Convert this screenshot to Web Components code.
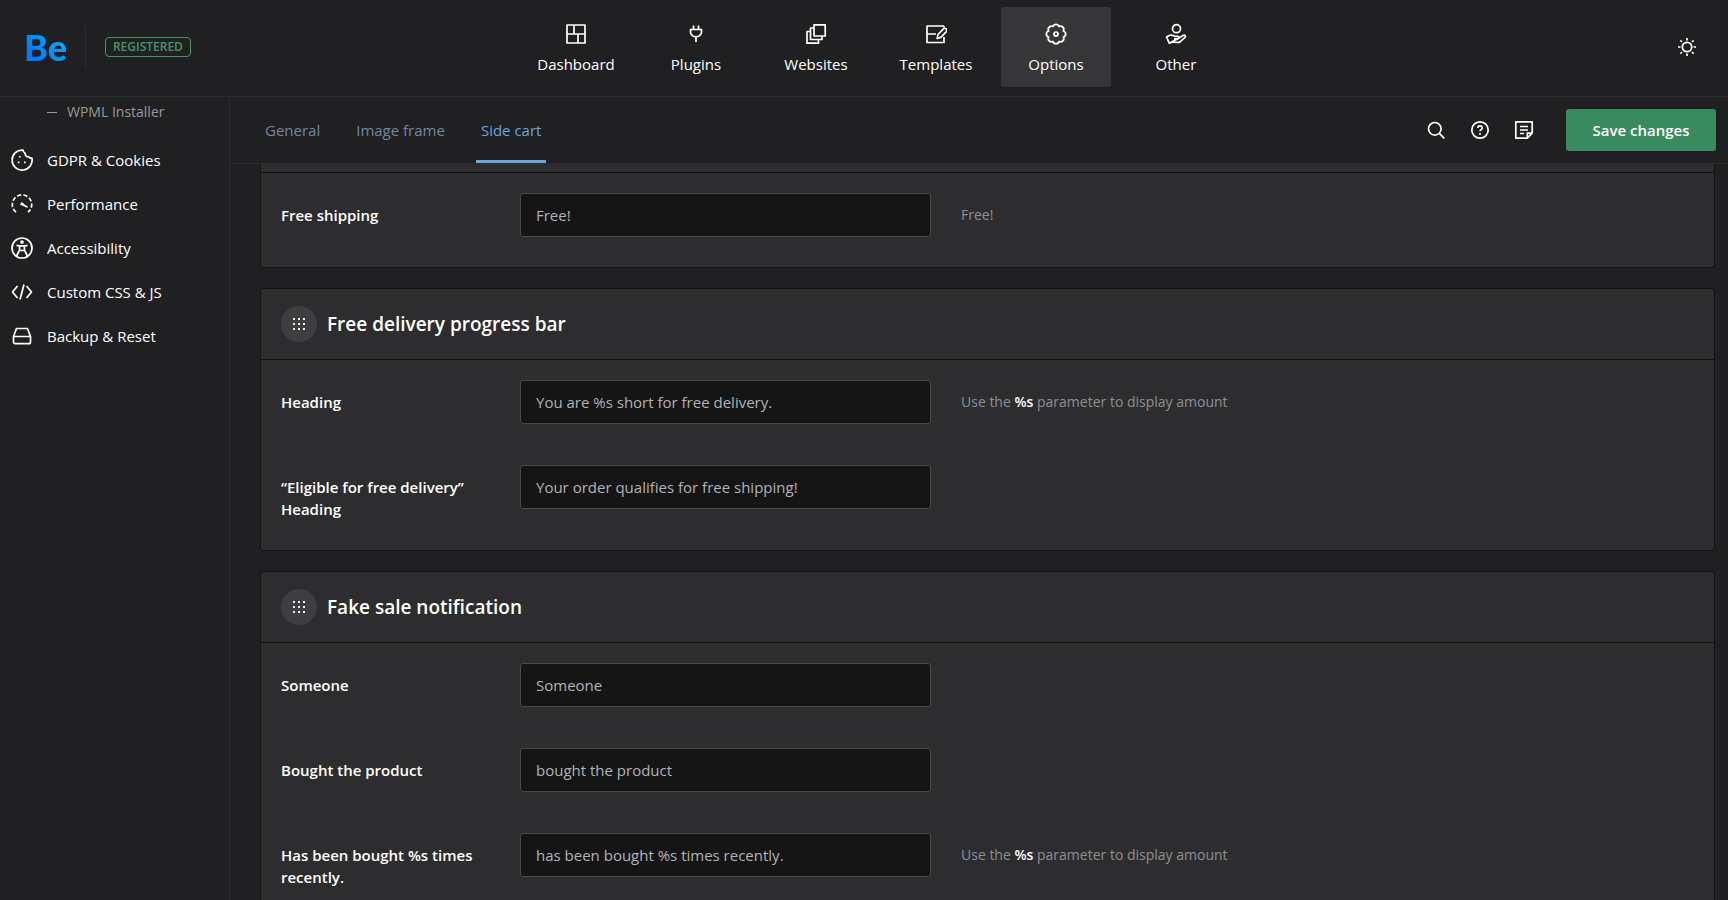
<!DOCTYPE html>
<html lang="en">
<head>
<meta charset="utf-8">
<title>Be Options – Side cart</title>
<style>
  :root {
    --bg: #202022;
    --line: #2d2d2f;
    --card: #2d2d2f;
    --card-line: #131314;
    --text: #fff;
    --muted: #98989c;
    --tab: #76849f;
    --accent: #6ca4dd;
    --green: #398a5e;
  }
  html, body { margin: 0; height: 100%; }
  body {
    background: var(--bg);
    color: var(--text);
    font: 15px/22px "Open Sans", "Noto Sans", sans-serif;
    overflow: hidden;
  }
</style>
</head>
<body>
<be-app>
  <be-header slot="header">
    <be-nav-item icon="dashboard">Dashboard</be-nav-item>
    <be-nav-item icon="plug">Plugins</be-nav-item>
    <be-nav-item icon="websites">Websites</be-nav-item>
    <be-nav-item icon="templates">Templates</be-nav-item>
    <be-nav-item icon="options" active>Options</be-nav-item>
    <be-nav-item icon="other">Other</be-nav-item>
  </be-header>

  <be-sidebar slot="sidebar">
    <be-side-item sub>WPML Installer</be-side-item>
    <be-side-item icon="cookie">GDPR &amp; Cookies</be-side-item>
    <be-side-item icon="gauge">Performance</be-side-item>
    <be-side-item icon="accessibility">Accessibility</be-side-item>
    <be-side-item icon="code">Custom CSS &amp; JS</be-side-item>
    <be-side-item icon="drive">Backup &amp; Reset</be-side-item>
  </be-sidebar>

  <be-toolbar slot="toolbar">
    <be-tab>General</be-tab>
    <be-tab>Image frame</be-tab>
    <be-tab active>Side cart</be-tab>
  </be-toolbar>

  <be-card continued>
    <be-field label="Free shipping" value="Free!">Free!</be-field>
  </be-card>
  <be-card heading="Free delivery progress bar">
    <be-field label="Heading" value="You are %s short for free delivery.">Use the <strong>%s</strong> parameter to display amount</be-field>
    <be-field label="“Eligible for free delivery” Heading" value="Your order qualifies for free shipping!"></be-field>
  </be-card>
  <be-card heading="Fake sale notification">
    <be-field label="Someone" value="Someone"></be-field>
    <be-field label="Bought the product" value="bought the product"></be-field>
    <be-field label="Has been bought %s times recently." value="has been bought %s times recently.">Use the <strong>%s</strong> parameter to display amount</be-field>
  </be-card>
</be-app>

<script>
const ICONS = {
  dashboard: '<path d="M2 2h18v18H2zM2 11h18M9 2v9M13 11v9"/>',
  plug: '<path d="M8.500 2.500v4M13.500 2.500v4M5.500 6.500h11v2.500a5.500 4.800 0 0 1-11 0zM11 14v5"/>',
  websites: '<path d="M9 1.800h11.200V13H9zM9 5H5.500v11.500H17V13M5.500 8.500H2v11.700h11.500v-3.500"/>',
  templates: '<path d="M19 3H2v16.500h17v-5.500M19 3v1.500M2 11h9"/><path d="m12.200 15.500.8-4 5.400-5.600a1.900 1.900 0 0 1 2.900 2.700l-5.500 5.800z"/>',
  options: '<path d="M7.940 3.610a3.200 3.200 0 0 1 6.120 0 3.200 3.200 0 0 1 4.330 4.330 3.200 3.200 0 0 1 0 6.120 3.200 3.200 0 0 1-4.330 4.330 3.200 3.200 0 0 1-6.120 0 3.200 3.200 0 0 1-4.330-4.330 3.200 3.200 0 0 1 0-6.120 3.200 3.200 0 0 1 4.330-4.330z"/><circle cx="11" cy="11" r="2"/>',
  other: '<circle cx="11.500" cy="5.700" r="4"/><path d="M4.300 20.200 1.500 14l3.200-1.700c2.300-.8 3.600.2 5.300 1h2.800c1.700.2 1.700 2.400 0 2.600H9M12.800 15.700l5.200-3.200c1.800-.9 3.200.9 1.800 2.200l-4.600 4c-1.200.8-2.500.8-4 .7-2.700-.2-4.200-.8-6.900.8z"/>',
  sun: '<circle cx="11" cy="11" r="4.700"/><path d="M11 2v2.500M11 17.500V20M2 11h2.500M17.500 11H20M4.400 4.400 6 6M16 16l1.600 1.600M4.400 17.600 6 16M16 6l1.600-1.600"/>',
  search: '<circle cx="9.800" cy="9.800" r="6.300"/><path d="m14.300 14.300 5 5"/>',
  help: '<circle cx="11" cy="11" r="8.200"/><path d="M8.800 9c0-2.700 4.400-2.700 4.400-.1 0 1.600-2.200 1.700-2.200 3.400"/><path d="M11 13.900v1.800"/>',
  note: '<path d="M2.800 2.800h16.400v11.400l-4.900 5H2.800zM19.200 14.200h-4.900v5M7 7.500h8M7 11h8M7 14.500h4"/>',
  cookie: '<path d="M12 1.100A10 10 0 1 0 20.900 9c-1.200.3-2.500 0-3.200-1.200-2.300-.1-3.800-1.400-3.500-3.600C12.800 3.700 12 2.600 12 1.100z"/><path d="M8 7h1.600v1.600H8zM6.800 12.600h1.600v1.600H6.800zM13 12.600h1.600v1.600H13z" fill="currentColor" stroke="none"/>',
  gauge: '<path d="M5 19.200A9.700 9.700 0 1 1 17 19.200" stroke-dasharray="4.200 2.100"/><path d="m10.500 10.800 6 3.400"/><path d="m9.700 10.400 2.800 1.500" stroke-width="2.600"/>',
  accessibility: '<circle cx="11" cy="11" r="10"/><path d="M5.500 8.300c3.700.9 7.300.9 11 0M8.600 9v4l-3 6M13.400 9v4l3 6M8.600 13.500h4.800"/><circle cx="11" cy="5" r="1" fill="currentColor"/>',
  code: '<path d="M6.500 5 1.500 11l5 6M15.500 5l5 6-5 6M13 3.500l-4 15"/>',
  drive: '<path d="M5.500 3.500h11l3 8v5.500a1.700 1.700 0 0 1-1.700 1.700H4.200A1.700 1.700 0 0 1 2.500 17v-5.500zM2.800 11.500h16.400"/>',
};
const icon = name =>
  `<svg viewBox="0 0 22 22" width="22" height="22" fill="none" stroke="currentColor" stroke-width="1.700" stroke-linejoin="round" aria-hidden="true">${ICONS[name] || ''}</svg>`;

const define = (tag, render) => customElements.define(tag, class extends HTMLElement {
  constructor() {
    super();
    this.attachShadow({ mode: 'open' });
  }
  connectedCallback() {
    const t = document.createElement('template');
    t.innerHTML = '<style>*{box-sizing:border-box}svg{display:block;flex:none}</style>' + render(this);
    this.shadowRoot.replaceChildren(t.content.cloneNode(true));
  }
});

define('be-app', () => `
  <style>
    :host { display: grid; height: 100vh; grid-template: auto auto minmax(0, 1fr) / 230px minmax(0, 1fr); overflow: hidden; }
    .top { grid-column: 1 / -1; }
    .side { grid-row: 2 / 4; border-right: 1px solid var(--line); }
    main { display: flex; flex-direction: column; gap: 20px; padding: 0 13px 0 30px; overflow: hidden; }
  </style>
  <div class="top"><slot name="header"></slot></div>
  <div class="side"><slot name="sidebar"></slot></div>
  <div><slot name="toolbar"></slot></div>
  <main><slot></slot></main>`);

define('be-header', () => `
  <style>
    :host { display: block; border-bottom: 1px solid var(--line); }
    header { display: grid; grid-template-columns: 1fr auto 1fr; align-items: center; height: 96px; padding: 0 0 2px 24px; }
    .brand { display: flex; align-items: center; }
    .logo {
      font: 900 36px/42px Lato, sans-serif; text-decoration: none; color: transparent;
      background: linear-gradient(45deg, #0079ff 25%, #00b0ff 80%); background-clip: text; -webkit-background-clip: text;
    }
    .badge {
      margin-left: 19px; border: 1px solid #3d9565; border-radius: 4px; padding: 0 7px;
      color: #46946a; font-size: 12px; line-height: 18px; font-weight: 600;
    }
    .rule { width: 1px; height: 42px; margin-left: 18px; background: var(--line); }
    nav { display: flex; gap: 10px; }
    button { justify-self: end; display: grid; place-items: center; width: 40px; height: 40px; margin-right: 21px; padding: 0; border: 0; background: none; color: #fff; }
  </style>
  <header>
    <div class="brand"><a class="logo" href="#">Be</a><span class="rule"></span><span class="badge">REGISTERED</span></div>
    <nav aria-label="Main"><slot></slot></nav>
    <button type="button" aria-label="Toggle theme">${icon('sun')}</button>
  </header>`);

define('be-nav-item', el => `
  <style>
    :host { display: block; }
    a { display: flex; flex-direction: column; align-items: center; gap: 8px; width: 110px; height: 80px; padding-top: 16px; border-radius: 3px; color: #fff; text-decoration: none; }
    :host([active]) a { background: #363638; }
  </style>
  <a href="#">${icon(el.getAttribute('icon'))}<span><slot></slot></span></a>`);

define('be-sidebar', () => `
  <style>:host { display: block; padding-bottom: 20px; } nav { display: flex; flex-direction: column; }</style>
  <nav aria-label="Options"><slot></slot></nav>`);

define('be-side-item', el => `
  <style>
    :host { display: block; }
    a { display: flex; align-items: center; gap: 14px; height: 44px; padding-left: 11px; color: #fff; text-decoration: none; }
    :host([sub]) a { gap: 10px; height: 30px; margin-bottom: 11px; padding-left: 47px; color: var(--muted); font-size: 14px; }
    i { width: 10px; height: 1px; background: currentColor; }
  </style>
  <a href="#">${el.hasAttribute('sub') ? '<i></i>' : icon(el.getAttribute('icon'))}<span><slot></slot></span></a>`);

define('be-toolbar', () => `
  <style>
    :host { display: flex; align-items: center; height: 67px; padding: 0 12px 0 30px; border-bottom: 1px solid var(--line); box-sizing: border-box; }
    nav { display: flex; gap: 26px; align-self: stretch; flex: 1; }
    button { display: grid; place-items: center; padding: 0; border: 0; background: none; color: #fff; font: inherit; }
    .tool { width: 44px; height: 44px; }
    .save { width: 150px; height: 42px; margin-left: 20px; border-radius: 3px; background: var(--green); font-weight: 600; }
  </style>
  <nav aria-label="Sections"><slot></slot></nav>
  <button class="tool" type="button" aria-label="Search">${icon('search')}</button>
  <button class="tool" type="button" aria-label="Help">${icon('help')}</button>
  <button class="tool" type="button" aria-label="Notes">${icon('note')}</button>
  <button class="save" type="button">Save changes</button>`);

define('be-tab', () => `
  <style>
    :host { display: flex; }
    a { display: flex; align-items: center; padding: 3px 5px 0; border-bottom: 3px solid transparent; color: var(--tab); text-decoration: none; }
    :host([active]) a { color: var(--accent); border-color: var(--accent); }
  </style>
  <a href="#"><slot></slot></a>`);

define('be-card', el => `
  <style>
    :host { display: block; flex: none; border: 1px solid var(--card-line); border-radius: 3px; background: var(--card); box-shadow: 0 1px 6px rgba(255, 255, 255, .02); }
    :host([continued]) { border-top: 0; border-radius: 0 0 3px 3px; }
    header { display: flex; align-items: center; gap: 10px; height: 71px; padding: 0 20px; border-bottom: 1px solid var(--card-line); }
    :host([continued]) header { height: 9px; }
    button { display: grid; place-items: center; width: 36px; height: 36px; padding: 0; border: 0; border-radius: 50%; background: #3e3e40; color: #eee; }
    h2 { margin: 0; font-size: 19px; line-height: 28px; font-weight: 600; }
    .body { display: flex; flex-direction: column; gap: 41px; padding: 20px 20px 30px; }
  </style>
  <header>${el.hasAttribute('continued') ? '' : `
    <button type="button" aria-label="Move section">
      <svg width="12" height="12" viewBox="0 0 12 12" fill="currentColor" aria-hidden="true"><path d="M0 0h2v2H0zM5 0h2v2H5zM10 0h2v2h-2zM0 5h2v2H0zM5 5h2v2H5zM10 5h2v2h-2zM0 10h2v2H0zM5 10h2v2H5zM10 10h2v2h-2z"/></svg>
    </button>
    <h2>${el.getAttribute('heading')}</h2>`}
  </header>
  <div class="body"><slot></slot></div>`);

define('be-field', el => `
  <style>
    :host { display: grid; grid-template-columns: minmax(0, 209fr) minmax(0, 411fr) minmax(0, 733fr); column-gap: 30px; align-items: start; }
    label { padding-top: 11px; font-weight: 600; }
    input { width: 100%; height: 44px; padding: 0 15px; border: 1px solid #48484b; border-radius: 3px; background: #151515; color: #b2b2b8; font: inherit; }
    .help { padding-top: 11px; color: #8e8e96; font-size: 14px; }
    ::slotted(strong) { color: #fff; font-weight: 600; }
  </style>
  <label for="f">${el.getAttribute('label')}</label>
  <input id="f" type="text" value="${el.getAttribute('value')}">
  <div class="help"><slot></slot></div>`);
</script>
</body>
</html>
